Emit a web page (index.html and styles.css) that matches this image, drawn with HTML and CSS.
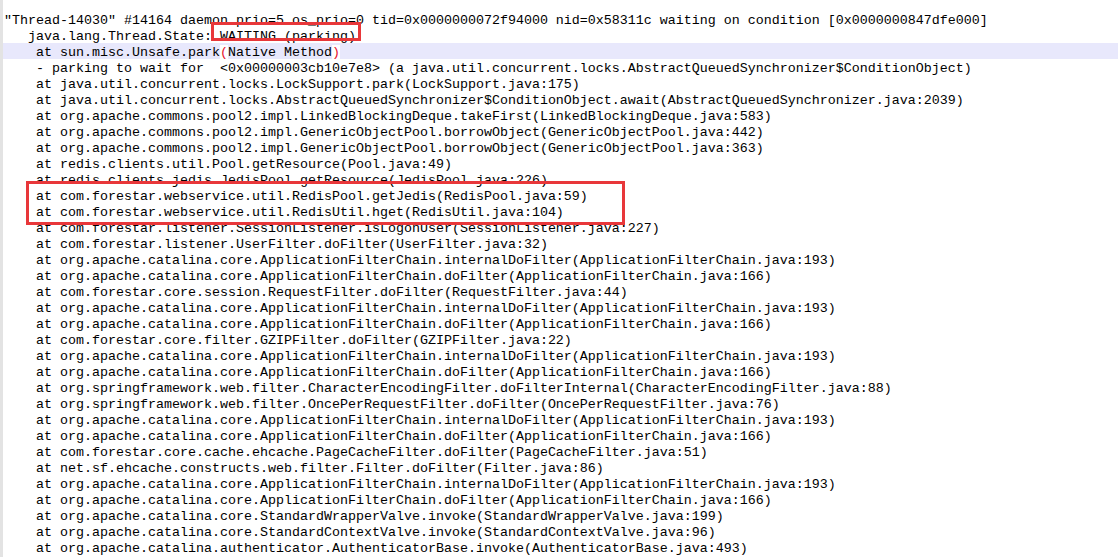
FILE: index.html
```html
<!DOCTYPE html>
<html>
<head>
  <meta charset="utf-8">
  <link rel="stylesheet" href="styles.css">
</head>
<body>
<div class="dump">
  <div class="ln">"Thread-14030" #14164 daemon prio=5 os_prio=0 tid=0x0000000072f94000 nid=0x58311c waiting on condition [0x0000000847dfe000]</div>
  <div class="ln">   java.lang.Thread.State: WAITING (parking)</div>
  <div class="ln current">    at sun.misc.Unsafe.park<span class="brace">(</span>Native Method<span class="brace">)</span></div>
  <div class="ln">    - parking to wait for  &lt;0x00000003cb10e7e8&gt; (a java.util.concurrent.locks.AbstractQueuedSynchronizer$ConditionObject)</div>
  <div class="ln">    at java.util.concurrent.locks.LockSupport.park(LockSupport.java:175)</div>
  <div class="ln">    at java.util.concurrent.locks.AbstractQueuedSynchronizer$ConditionObject.await(AbstractQueuedSynchronizer.java:2039)</div>
  <div class="ln">    at org.apache.commons.pool2.impl.LinkedBlockingDeque.takeFirst(LinkedBlockingDeque.java:583)</div>
  <div class="ln">    at org.apache.commons.pool2.impl.GenericObjectPool.borrowObject(GenericObjectPool.java:442)</div>
  <div class="ln">    at org.apache.commons.pool2.impl.GenericObjectPool.borrowObject(GenericObjectPool.java:363)</div>
  <div class="ln">    at redis.clients.util.Pool.getResource(Pool.java:49)</div>
  <div class="ln">    at redis.clients.jedis.JedisPool.getResource(JedisPool.java:226)</div>
  <div class="ln">    at com.forestar.webservice.util.RedisPool.getJedis(RedisPool.java:59)</div>
  <div class="ln">    at com.forestar.webservice.util.RedisUtil.hget(RedisUtil.java:104)</div>
  <div class="ln">    at com.forestar.listener.SessionListener.isLogonUser(SessionListener.java:227)</div>
  <div class="ln">    at com.forestar.listener.UserFilter.doFilter(UserFilter.java:32)</div>
  <div class="ln">    at org.apache.catalina.core.ApplicationFilterChain.internalDoFilter(ApplicationFilterChain.java:193)</div>
  <div class="ln">    at org.apache.catalina.core.ApplicationFilterChain.doFilter(ApplicationFilterChain.java:166)</div>
  <div class="ln">    at com.forestar.core.session.RequestFilter.doFilter(RequestFilter.java:44)</div>
  <div class="ln">    at org.apache.catalina.core.ApplicationFilterChain.internalDoFilter(ApplicationFilterChain.java:193)</div>
  <div class="ln">    at org.apache.catalina.core.ApplicationFilterChain.doFilter(ApplicationFilterChain.java:166)</div>
  <div class="ln">    at com.forestar.core.filter.GZIPFilter.doFilter(GZIPFilter.java:22)</div>
  <div class="ln">    at org.apache.catalina.core.ApplicationFilterChain.internalDoFilter(ApplicationFilterChain.java:193)</div>
  <div class="ln">    at org.apache.catalina.core.ApplicationFilterChain.doFilter(ApplicationFilterChain.java:166)</div>
  <div class="ln">    at org.springframework.web.filter.CharacterEncodingFilter.doFilterInternal(CharacterEncodingFilter.java:88)</div>
  <div class="ln">    at org.springframework.web.filter.OncePerRequestFilter.doFilter(OncePerRequestFilter.java:76)</div>
  <div class="ln">    at org.apache.catalina.core.ApplicationFilterChain.internalDoFilter(ApplicationFilterChain.java:193)</div>
  <div class="ln">    at org.apache.catalina.core.ApplicationFilterChain.doFilter(ApplicationFilterChain.java:166)</div>
  <div class="ln">    at com.forestar.core.cache.ehcache.PageCacheFilter.doFilter(PageCacheFilter.java:51)</div>
  <div class="ln">    at net.sf.ehcache.constructs.web.filter.Filter.doFilter(Filter.java:86)</div>
  <div class="ln">    at org.apache.catalina.core.ApplicationFilterChain.internalDoFilter(ApplicationFilterChain.java:193)</div>
  <div class="ln">    at org.apache.catalina.core.ApplicationFilterChain.doFilter(ApplicationFilterChain.java:166)</div>
  <div class="ln">    at org.apache.catalina.core.StandardWrapperValve.invoke(StandardWrapperValve.java:199)</div>
  <div class="ln">    at org.apache.catalina.core.StandardContextValve.invoke(StandardContextValve.java:96)</div>
  <div class="ln">    at org.apache.catalina.authenticator.AuthenticatorBase.invoke(AuthenticatorBase.java:493)</div>

  <!-- annotation boxes drawn over the dump -->
  <div class="mark mark-state"></div>
  <div class="mark mark-redis"></div>
</div>
</body>
</html>
```

FILE: styles.css
```css
html, body {
  margin: 0;
  padding: 0;
  background: #fff;
  overflow: hidden;
}
.dump {
  position: relative;
  height: 557px;
  padding-top: 11px;
  box-sizing: border-box;
  border-left: 3px solid #e3e3e3;
  font-family: "Liberation Mono", "Courier New", monospace;
  font-size: 13.333px;
  color: #000;
}
/* rows are 16px apart; the taller line-height only nudges glyphs down */
.ln {
  height: 16px;
  line-height: 20px;
  padding-left: 1px;
  white-space: pre;
}
.current {
  background: #e8e8fc;
}
.brace {
  color: #e8102c;
  background: #fff;
}
.mark {
  position: absolute;
  border: 3px solid #e8373a;
  box-sizing: border-box;
}
.mark-state {
  left: 208px;
  top: 22px;
  width: 150px;
  height: 19px;
}
.mark-redis {
  left: 23px;
  top: 181px;
  width: 599px;
  height: 44px;
}
```
